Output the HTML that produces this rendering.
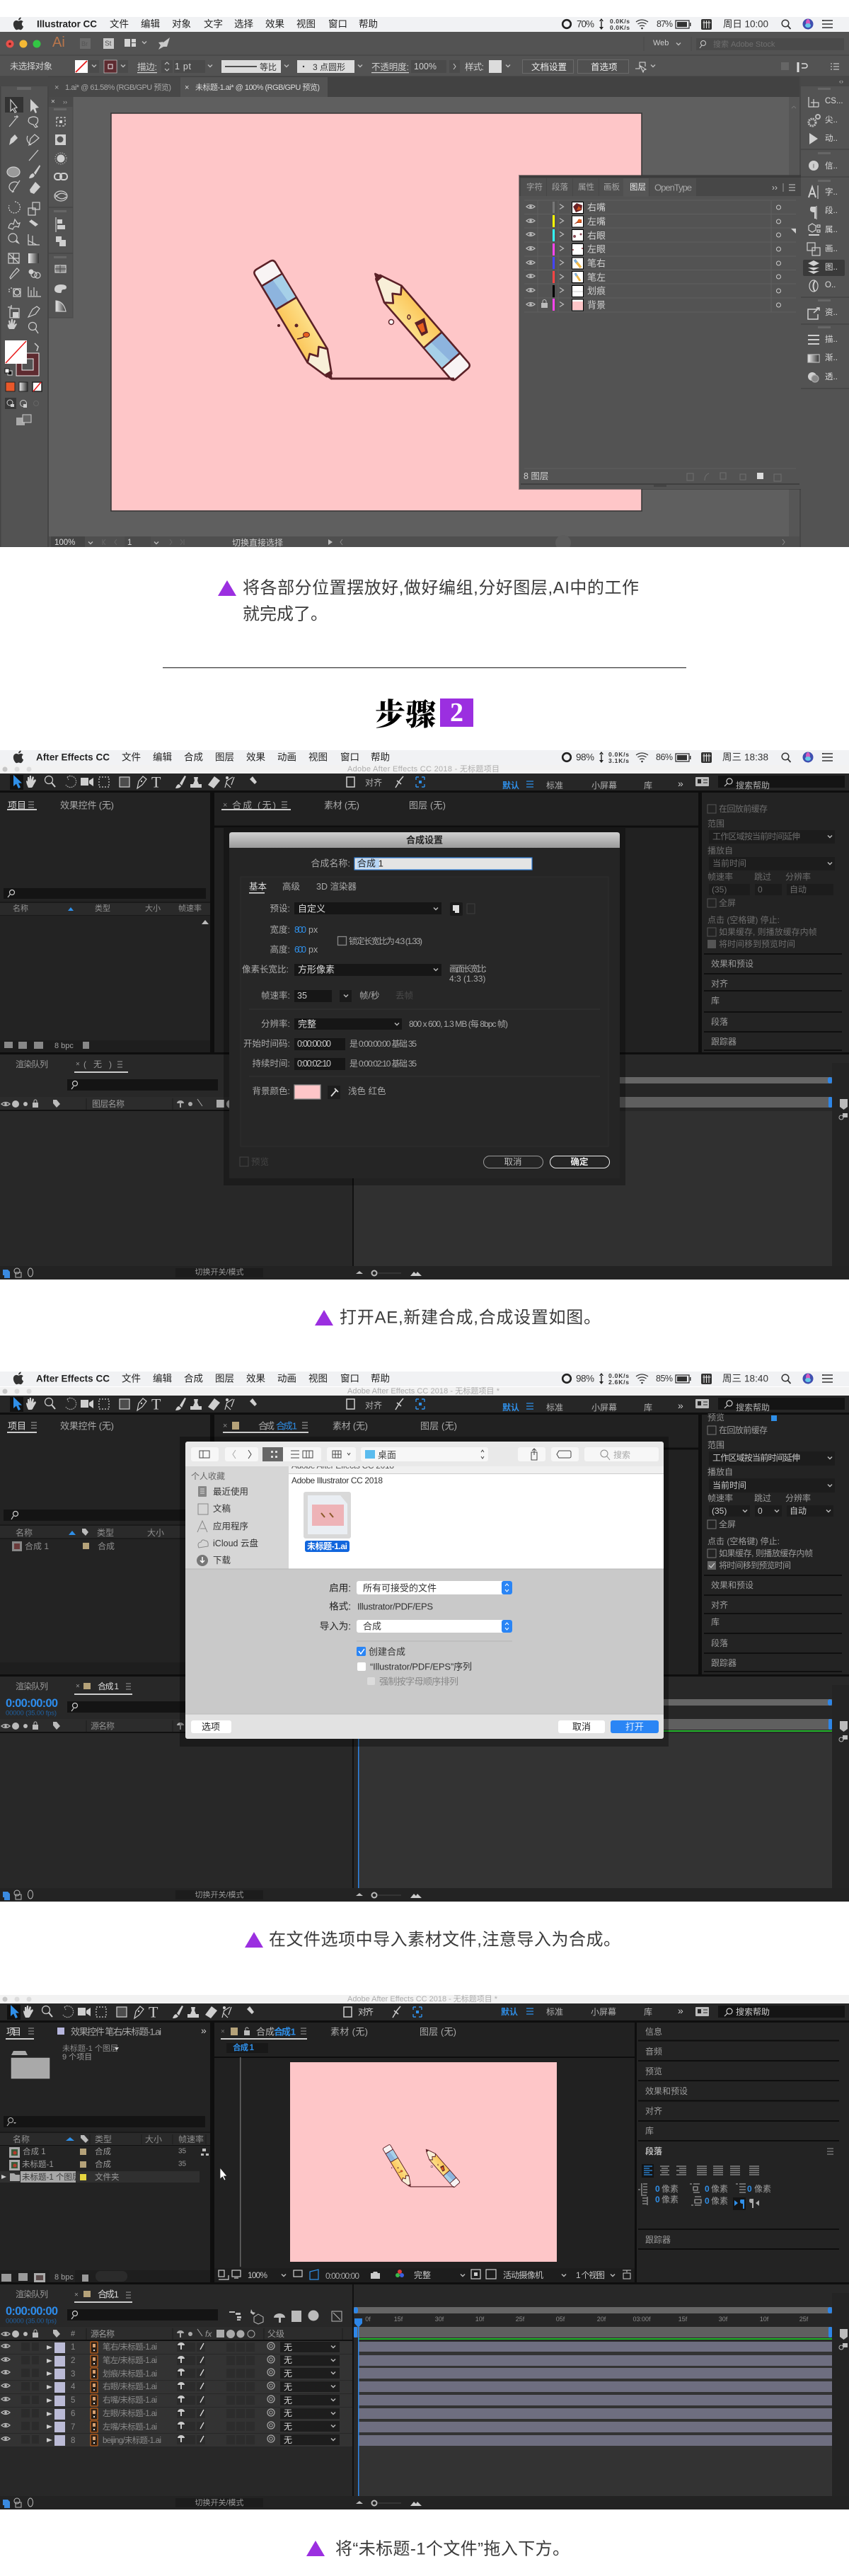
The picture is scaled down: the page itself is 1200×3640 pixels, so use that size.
<!DOCTYPE html>
<html lang="zh"><head><meta charset="utf-8"><title>步骤</title>
<style>
html,body{margin:0;padding:0;background:#fff}
svg{display:block}
text{font-family:"Liberation Sans","Noto Sans CJK SC",sans-serif;dominant-baseline:central;white-space:pre}
.cap{font-size:24px;fill:#3a3a3a}
.ic{fill:none;stroke:#cfcfcf;stroke-width:1.2}
.f{fill:#cfcfcf;stroke:none}
</style></head><body>
<svg xmlns="http://www.w3.org/2000/svg" width="1200" height="3640" viewBox="0 0 1200 3640">
<defs>
<linearGradient id="yl" x1="0" x2="1" y1="0" y2="0"><stop offset="0" stop-color="#fbc65a"/><stop offset="1" stop-color="#fde08a"/></linearGradient>
<linearGradient id="gg" x1="0" x2="1" y1="0" y2="0"><stop offset="0" stop-color="#eee"/><stop offset="1" stop-color="#333"/></linearGradient>
<linearGradient id="tb" x1="0" x2="0" y1="0" y2="1"><stop offset="0" stop-color="#d0d0d0"/><stop offset="1" stop-color="#9a9a9a"/></linearGradient>
<g id="pencil" stroke="#5b2127" stroke-width="2.6" stroke-linejoin="round">
<path d="M-17 24V6Q-17 0-11 0H11Q17 0 17 6V24Z" fill="#f8f4f4"/>
<path d="M-17 24H17V63H-17Z" fill="#8db4de"/><path d="M1 25H16V62H4Z" fill="#a6d0e8" stroke="none"/>
<path d="M-17 63H17V148L8 139L0 150L-8 141L-17 150Z" fill="url(#yl)"/>
<path d="M-17 150L-8 141L0 150L8 139L17 148L4 181H-4Z" fill="#f8efd8"/>
<path d="M-4 178L0 187L4 178Z" fill="#5b2127"/>
</g>
<g id="art">
<use href="#pencil" transform="translate(372,375) rotate(-31)"/>
<use href="#pencil" transform="translate(653,528) rotate(139)"/>
<path d="M468 535H642" stroke="#5b2127" stroke-width="3" fill="none"/>
<circle cx="419" cy="460" r="2.5" fill="#5b2127"/><circle cx="394" cy="460" r="2" fill="#5b2127"/>
<path d="M420 479Q428 478 432 474" stroke="#5b2127" stroke-width="1.6" fill="none"/><ellipse cx="433" cy="473" rx="4.5" ry="3.5" fill="#e85f20" stroke="#5b2127"/>
<ellipse cx="578" cy="448" rx="2" ry="3" fill="none" stroke="#5b2127" stroke-width="1.4"/><circle cx="553" cy="455" r="3.5" fill="#fff" stroke="#5b2127" stroke-width="1.5"/>
<path d="M586 456L600 449L605 470L596 475Z" fill="#5b2127"/><path d="M590 460L598 456L601 468L596 470Z" fill="#e8601e"/>
</g>
<path id="apple" transform="scale(1.05)" fill="#333" d="M2.6-6.5c.6-.7 1-1.6.9-2.6-.9 0-1.9.6-2.5 1.3-.5.6-1 1.6-.9 2.5 1 .1 2-.5 2.5-1.2zM3.4-4.9c-1.4-.1-2.6.8-3.2.8-.7 0-1.7-.8-2.8-.8-1.4 0-2.8.8-3.5 2.1-1.5 2.6-.4 6.4 1.1 8.5.7 1 1.5 2.2 2.6 2.1 1 0 1.4-.7 2.7-.7s1.6.7 2.7.7 1.9-1 2.6-2.1c.8-1.2 1.1-2.3 1.2-2.4-.1 0-2.2-.9-2.2-3.4 0-2.1 1.7-3.1 1.8-3.2-1-1.5-2.5-1.6-3-1.6z"/>
<g id="macicons">
<circle cx="801" cy="10" r="5.8" fill="none" stroke="#222" stroke-width="2.6"/>
<path d="M850 2l-3 4h6zM850 18l-3-4h6zM849.3 5h1.4v10h-1.4z" fill="#222"/>
<g fill="none" stroke="#333" stroke-width="1.2"><path d="M899 7q8-6 17 0M901.500 10q6-4 12 0M904 13q3.500-2 7 0"/></g><circle cx="907.500" cy="16" r="1.300" fill="#333"/>
<rect x="955" y="5" width="19" height="11" fill="none" stroke="#222" stroke-width="1.200"/><rect x="957" y="7" width="14" height="7" fill="#333"/><rect x="975" y="8" width="1.500" height="5" fill="#333"/>
<rect x="991" y="3" width="15" height="15" rx="2" fill="#333"/><path d="M995 5v11M998.500 5v11M1002 5v11M993.500 8h11" stroke="#eee" stroke-width="1"/>
<circle cx="1110" cy="9" r="4.800" fill="none" stroke="#333" stroke-width="1.500"/><path d="M1113.500 12.500l4 4.500" stroke="#333" stroke-width="1.700"/>
<circle cx="1142" cy="10" r="7.500" fill="#3f4fb0"/><ellipse cx="1142" cy="8" rx="3" ry="5" fill="#d65ac0"/><ellipse cx="1142" cy="12" rx="4" ry="3" fill="#65c8e8"/>
<path d="M1162 5h15M1162 10h15M1162 15h15" stroke="#333" stroke-width="1.400"/><circle cx="1163" cy="5" r="1" fill="#333"/>
</g>
<g id="eye"><path d="M-6 0Q0-5 6 0Q0 5-6 0Z" fill="none" stroke="#bbb" stroke-width="1.300"/><circle r="1.800" fill="#bbb"/></g>
<path id="chev" d="M-3-1.500L0 1.500L3-1.500" fill="none" stroke="#bbb" stroke-width="1.400"/>
<path id="lay" d="M-3-3.500L2.500 0L-3 3.500" fill="none" stroke="#bbb" stroke-width="1.200"/>

<!-- AE frame, section-4 coordinates -->
<g id="aeframe">
<rect y="2819" width="1200" height="12" fill="#f2f2f2"/>
<circle cx="7" cy="2825" r="3.500" fill="#c6c6c6"/><circle cx="24" cy="2825" r="3.500" fill="#dcdcdc"/><circle cx="41" cy="2825" r="3.500" fill="#dcdcdc"/>
<rect y="2831" width="1200" height="24" fill="#262626"/>
<rect y="2855" width="1200" height="691" fill="#0e0e0e"/>
<rect y="2858" width="297" height="367" fill="#232323"/>
<rect x="0" y="3208" width="297" height="17" fill="#1e1e1e"/>
<rect x="303" y="2858" width="594" height="367" fill="#212121"/>
<rect y="3228" width="1200" height="318" fill="#282828"/>
<rect x="1015" y="2834" width="179" height="17" fill="#141414"/>
<path d="M1027 2838a4 4 0 1 1-.01 0M1024 2845l-4 4" stroke="#ccc" fill="none" stroke-width="1.200" transform="translate(4,0)"/>
<rect x="983" y="2836" width="19" height="13" rx="1" fill="#bbb"/><rect x="986" y="2839" width="5" height="6" fill="#262626"/><path d="M994 2840h6M994 2844h6" stroke="#262626"/>
</g>
<g id="aetools">
<rect x="10" y="-10" width="19" height="21" fill="#111"/>
<path d="M15-10V6L19 2.500L22 9L25 7.500L22 1.500H27Z" fill="#2f8fe8"/>
<g class="ic">
<path d="M36 8Q33 2 33-2L35-1V-7L37-7V-3L38-9L40-9V-3L42-8L44-7L43-2L46-4L47-2L43 5Q42 8 40 8Z" class="f"/>
<circle cx="65" cy="-3" r="5.500"/><path d="M69 1L74 7" stroke-width="2"/>
<path d="M91-7a8 8 0 1 1-2 11M91-7L95-9M91-7L93-3" stroke="#999" stroke-dasharray="2 1"/>
<rect x="110" y="-6" width="11" height="11" class="f"/><path d="M122-2L128-6V6L122 2Z" class="f"/>
<rect x="136" y="-7" width="14" height="14" stroke-dasharray="2 2"/>
<rect x="165" y="-7" width="14" height="14" fill="#4d4d4d"/>
<path d="M190 9L192-1L198-8L203-4L197 4Z"/><circle cx="196" cy="-1" r="1.200" class="f"/>
<path d="M244 9Q246 3 249 3L252 6Q250 9 244 9ZM250 2L257-9L259-8L253 5Z" class="f"/>
<path d="M265 3H281V8H265ZM269 3L271-2L270-7H276L275-2L277 3Z" class="f"/>
<path d="M290 4L299-8L307-2L298 9Z" class="f"/>
<circle cx="317" cy="-6" r="2" class="f"/><path d="M317-3L314 8M317-2L325-7M316 2L322 8"/><path d="M327-7L323 4"/>
<path d="M347 8L351 2M349-4L356 3L359 0L353-8ZM352-9L360-2" class="f" stroke="#ccc"/>
<rect x="486" y="-7" width="11" height="14" stroke-width="1.500"/>
<path d="M555 8L561-2L566-8M557-2L563 3" stroke-width="1.500"/>
</g>
<text x="210" y="0" font-size="22" fill="#cfcfcf" style="font-family:'Liberation Serif'">T</text>
<path d="M584-7v4M584-7h4M596-7h-4M596-7v4M584 7v-4M584 7h4M596 7h-4M596 7v-4" stroke="#2f8fe8" fill="none" stroke-width="1.400"/><rect x="588" y="-2" width="4" height="4" fill="#2f8fe8"/>
</g>
<g id="hdr">
<rect y="3288" width="498" height="18" fill="#2c2c2c"/><rect y="3306" width="498" height="2" fill="#111"/>
<use href="#eye" x="8" y="3298"/><circle cx="22" cy="3298" r="5" fill="#bbb"/><circle cx="36" cy="3298" r="3" fill="#bbb"/><rect x="46" y="3296" width="8" height="7" fill="#bbb"/><path d="M48 3296v-2a2 2 0 0 1 4 0v2" stroke="#bbb" fill="none"/>
<path d="M75 3292h5l5 6-5 5-5-6z" fill="#bbb"/>
<path d="M122 3290v16M244 3290v16M373 3290v16M484 3290v16" stroke="#1c1c1c"/>
<g fill="#aaa"><path d="M250 3297a5 4 0 0 1 10 0zM254 3297h2v6h-2z"/><circle cx="269" cy="3298" r="3"/><path d="M279 3291l7 10" stroke="#aaa" fill="none"/><rect x="306" y="3292" width="11" height="11"/><circle cx="326" cy="3298" r="6" /><circle cx="340" cy="3298" r="5.500"/><circle cx="355" cy="3298" r="5" fill="none" stroke="#aaa"/></g>
<rect x="500" y="3260" width="676" height="9" fill="#666"/><rect x="500" y="3269" width="676" height="19" fill="#262626"/><rect x="500" y="3288" width="676" height="15" fill="#5f5f5f"/>
<rect x="1176" y="3240" width="24" height="306" fill="#242424"/>
<path d="M1187 3291h11v11l-5.500 4-5.500-4z" fill="#bbb"/><circle cx="1189" cy="3317" r="3" fill="none" stroke="#bbb"/><rect x="1191" y="3311" width="7" height="6" fill="#bbb"/>
<rect x="500" y="3260" width="6" height="9" rx="3" fill="#2d86e8"/><rect x="1170" y="3260" width="6" height="9" rx="3" fill="#2d86e8"/>
<rect x="500" y="3288" width="5" height="15" rx="2" fill="#2d86e8"/><rect x="1171" y="3288" width="5" height="15" rx="2" fill="#2d86e8"/>
<rect x="498" y="3228" width="2" height="300" fill="#111"/>
<rect y="3527" width="1200" height="19" fill="#232323"/>
<rect x="248" y="3530" width="124" height="13" fill="#1c1c1c"/>
<rect x="95" y="3263" width="213" height="16" fill="#141414"/>
<g class="ic"><circle cx="106" cy="3269" r="3.500"/><path d="M104 3273l-3 4"/></g>
<g fill="#bbb"><path d="M324 3266h8v2h-8zM333 3268h7v3h-7zM335 3273h6v3h-6zM335 3277h5v2h-5z"/><path d="M355 3263l2 4 4 1-3 3-4-3z"/><path d="M365 3270l7 4v7l-7 3-6-3v-7z" fill="none" stroke="#bbb"/><path d="M387 3275a8 6 0 0 1 16 0zM394 3275h3v7h-3z"/><rect x="412" y="3265" width="14" height="16"/><circle cx="443" cy="3272" r="7.500"/></g>
<rect x="469" y="3266" width="14" height="14" fill="none" stroke="#bbb"/><path d="M471 3268l10 10" stroke="#bbb"/>
<g fill="#3a8ae0"><path d="M4 3532h7l3 3v9H6v-4H4z"/></g><g fill="none" stroke="#bbb"><circle cx="24" cy="3534" r="4"/><rect x="22" y="3536" width="8" height="7"/><ellipse cx="43" cy="3536" rx="3.500" ry="6"/></g>
<path d="M503 3538l5-4 5 4z" fill="#bbb"/><circle cx="529" cy="3537" r="3.500" fill="none" stroke="#bbb" stroke-width="2"/><path d="M534 3537h33" stroke="#444"/><path d="M580 3541l5-6 3 3 2-3 6 6z" fill="#ccc"/>
</g>
<g id="hastl"><rect x="506" y="3280" width="1.500" height="247" fill="#2d86e8"/><path d="M501 3276h11v7l-5.500 6-5.500-6z" fill="#2d86e8"/></g>
<g id="ltr">
<rect width="498" height="18" y="-9" fill="#333"/>
<use href="#eye" x="8" y="-2"/>
<rect x="30" y="-7" width="12" height="12" fill="#2b2b2b"/><rect x="45" y="-7" width="10" height="12" fill="#2b2b2b"/>
<path d="M66-3l8 3-8 3z" fill="#ccc"/><rect x="77" y="-7" width="15" height="15" fill="#bbbbd6"/>
<rect x="128" y="-8" width="10" height="16" rx="1" fill="#2a2018" stroke="#c0601a" stroke-width="1.300"/><rect x="131" y="-5" width="4" height="5" fill="#d8a070"/><rect x="132" y="3" width="2" height="2" fill="#ddd"/>
<rect x="250" y="-7" width="26" height="13" fill="#2b2b2b"/><path d="M251-3a5 4 0 0 1 10 0zM255-3h2v6h-2zM251 3h10" fill="#ccc"/>
<rect x="278" y="-7" width="12" height="13" fill="#2b2b2b"/><path d="M283 3L288-6" stroke="#ddd" stroke-width="1.300"/>
<rect x="320" y="-7" width="12" height="13" fill="#2c2c2c"/><rect x="334" y="-7" width="12" height="13" fill="#2c2c2c"/><rect x="348" y="-7" width="12" height="13" fill="#2c2c2c"/>
<circle cx="383" cy="-2" r="5" fill="none" stroke="#aaa" stroke-width="1.200"/><circle cx="383" cy="-2" r="2.200" fill="none" stroke="#aaa"/>
<rect x="396" y="-8" width="84" height="15" fill="#1d1d1d"/><use href="#chev" x="471" y="-1"/>
</g>
</defs>

<!-- ===== SECTION 1 : Illustrator ===== -->
<rect y="24" width="1200" height="21" fill="#f1f2f4"/>
<use href="#apple" x="26" y="34"/>
<g transform="translate(0,24)"><use href="#macicons"/></g>
<g font-size="13.500" fill="#222">
<text x="52" y="34" font-weight="700" font-size="13.500" textLength="85">Illustrator CC</text>
<text x="155" y="34">文件</text><text x="199" y="34">编辑</text><text x="243" y="34">对象</text><text x="288" y="34">文字</text><text x="331" y="34">选择</text><text x="375" y="34">效果</text><text x="419" y="34">视图</text><text x="464" y="34">窗口</text><text x="507" y="34">帮助</text>
<text x="815" y="34" textLength="25" fill="#333">70%</text>
<text x="928" y="34" textLength="23" fill="#333" font-size="12.500">87%</text>
<text x="1022" y="34" textLength="64" fill="#333">周日 10:00</text>
</g>
<g font-size="8.500" fill="#333" font-weight="700"><text x="862" y="30" textLength="28">0.0K/s</text><text x="862" y="39" textLength="28">0.0K/s</text></g>

<rect y="45" width="1200" height="728" fill="#535353"/>
<path d="M0 78H1200M0 108H1200" stroke="#414141"/>
<circle cx="14" cy="62" r="5.500" fill="#e8504a"/><circle cx="14" cy="62" r="1.800" fill="#7a1a18"/><circle cx="33" cy="62" r="5.500" fill="#f5b935"/><circle cx="52" cy="62" r="5.500" fill="#33c744"/>
<text x="74" y="60" font-size="20" fill="#b8764c" font-weight="400">Ai</text>
<rect x="113" y="54" width="15" height="15" fill="#6a6a6a"/><text x="115" y="62" font-size="9" fill="#555">Br</text>
<rect x="146" y="54" width="15" height="15" fill="#c9c9c9"/><text x="148" y="62" font-size="10" fill="#555">St</text>
<path d="M176 55h8v11h-8zM186 55h6v5h-6zM186 61h6v5h-6z" fill="#d4d4d4"/><use href="#chev" x="204" y="60"/>
<path d="M224 70L228 62L240 53L236 66L231 66ZM224 60L231 59L227 64Z" fill="#c9c9c9"/>
<path d="M910 52V72M977 52V72" stroke="#4a4a4a"/>
<text x="923" y="61" font-size="11" fill="#ccc" font-weight="400">Web</text><use href="#chev" x="959" y="62"/>
<rect x="984" y="54" width="209" height="17" fill="#4a4a4a"/><circle cx="994" cy="61" r="3.500" fill="none" stroke="#ccc"/><path d="M992 64l-3 4" stroke="#ccc"/>
<text x="1008" y="63" font-size="11" fill="#6f6f6f">搜索 Adobe Stock</text>

<!-- control bar -->
<g font-size="12.500" fill="#d0d0d0">
<text x="14" y="94" textLength="60">未选择对象</text>
<rect x="106" y="85" width="18" height="18" fill="#fff"/><path d="M107 102L123 86" stroke="#e81a1a" stroke-width="1.800"/>
<rect x="126" y="85" width="14" height="18" fill="#4b4b4b"/><use href="#chev" x="133" y="93"/>
<rect x="147" y="85" width="18" height="18" fill="#5e2b30" stroke="#ddd" stroke-width=".6"/><rect x="153" y="91" width="6" height="6" fill="none" stroke="#eee"/>
<rect x="167" y="85" width="14" height="18" fill="#4b4b4b"/><use href="#chev" x="174" y="93"/>
<text x="194" y="95" textLength="28" text-decoration="underline">描边:</text>
<rect x="228" y="85" width="16" height="18" fill="#4b4b4b"/><path d="M233 91l3-3 3 3M233 97l3 3 3-3" stroke="#ccc" fill="none"/>
<rect x="246" y="85" width="44" height="18" fill="#4a4a4a"/><text x="247" y="94" textLength="23">1 pt</text>
<use href="#chev" x="297" y="93"/>
<rect x="313" y="85" width="84" height="18" fill="#dcdcdc"/><path d="M318 94H363" stroke="#222" stroke-width="1.600"/><text x="367" y="95" fill="#333" font-size="12">等比</text><use href="#chev" x="405" y="93"/>
<rect x="420" y="85" width="81" height="18" fill="#dcdcdc"/><circle cx="429" cy="94" r="1.200" fill="#333"/><text x="442" y="95" fill="#333" font-size="12">3 点圆形</text><use href="#chev" x="509" y="93"/>
<text x="525" y="95" textLength="53" text-decoration="underline">不透明度:</text>
<rect x="581" y="85" width="50" height="18" fill="#4a4a4a"/><text x="585" y="94">100%</text>
<rect x="635" y="85" width="15" height="18" fill="#4b4b4b"/><path d="M641 90l3 4-3 4" stroke="#ccc" fill="none"/>
<text x="657" y="95" textLength="27">样式:</text>
<rect x="691" y="85" width="18" height="18" fill="#dcdcdc"/><use href="#chev" x="718" y="93"/>
<rect x="738.500" y="84.500" width="72" height="19" fill="#505050" stroke="#6a6a6a"/><text x="751" y="95" fill="#eee">文档设置</text>
<rect x="816.500" y="84.500" width="72" height="19" fill="#505050" stroke="#6a6a6a"/><text x="835" y="95" fill="#eee">首选项</text>
</g>
<path d="M898 97h6v-9h8v6M905 93l8 5-3 1-1 3z" fill="none" stroke="#ddd"/><use href="#chev" x="923" y="93"/>
<rect x="1104" y="88" width="11" height="11" fill="#666"/><path d="M1128 88v14" stroke="#ddd" stroke-width="3"/><path d="M1133 90h5a3 3 0 0 1 0 6h-5" stroke="#ddd" fill="none" stroke-width="1.500"/><path d="M1174 90h2M1174 94h2M1174 98h2M1178 90h8M1178 94h8M1178 98h8" stroke="#ddd"/>

<!-- tabs row -->
<rect y="108" width="1200" height="29" fill="#424242"/>
<rect x="0" y="108" width="68" height="14" fill="#484848"/>
<rect x="68" y="109" width="187" height="28" fill="#484848"/>
<rect x="255" y="109" width="208" height="28" fill="#535353"/>
<g font-size="11" fill="#a8a8a8"><text x="77" y="124">×</text><text x="92" y="124" textLength="150">1.ai* @ 61.58% (RGB/GPU 预览)</text></g>
<g font-size="11" fill="#dcdcdc"><text x="261" y="124">×</text><text x="276" y="124" textLength="176">未标题-1.ai* @ 100% (RGB/GPU 预览)</text></g>

<!-- canvas -->
<rect x="69" y="137" width="1061" height="636" fill="#5f5f5f"/>
<rect x="1115" y="137" width="15" height="621" fill="#565656"/>
<rect x="69" y="758" width="1061" height="15" fill="#4f4f4f"/>
<rect x="157" y="160" width="750" height="562" fill="#fec6c8" stroke="#333" stroke-width="1.500"/>
<use href="#art"/>
<path d="M1122 150l-3 3M1122 150l3 3" stroke="#777"/>

<!-- left tools -->
<rect x="0" y="122" width="68" height="651" fill="#535353"/>
<rect x="67" y="122" width="2" height="651" fill="#454545"/>
<rect x="0" y="122" width="1.500" height="651" fill="#444"/>
<path d="M0 773H69" stroke="#444"/>
<rect x="24" y="123" width="20" height="4" fill="#666"/>
<rect x="7" y="137" width="26" height="22" fill="#333"/>
<g class="ic">
<path d="M15 141V157L18 154L21 159L23 158L20 153L24 152Z"/>
<path d="M43 140V158L47 154L50 160L52 159L50 153L55 152Z" class="f"/>
<path d="M13 179L23 167M24 163v4M20 165h6"/><path d="M41 167q7-4 12 0 2 6-3 9l3 3-3 1-3-4q-6-1-7-5z"/>
<path d="M13 205L15 196L21 190L25 195L19 201ZM18 198l2 2" class="f" stroke="#ccc"/>
<path d="M41 205L43 196L49 190L55 195L48 201Z"/><path d="M44 205q-8-6-5-13"/>
<path d="M41 227L54 212"/>
<ellipse cx="19" cy="243" rx="9" ry="7" fill="#9a9a9a"/>
<path d="M41 252Q43 245 47 245L49 248Q47 252 41 252ZM48 244L56 233L57 235L50 247Z" class="f"/>
<path d="M28 255L17 272M25 258a8 7 0 1 0-5 13"/>
<path d="M42 268L50 257L57 264L48 274L43 272Z" class="f"/>
<path d="M21 285a8 8 0 1 1-8 5" stroke-dasharray="2 1.500"/><rect x="40" y="294" width="10" height="10"/><rect x="46" y="286" width="10" height="10"/>
<path d="M12 322q2-9 7-5l2-7 4 6 3-1-2 6q-6-3-8 3z"/><path d="M41 321L48 314M44 310l10 7-4 3-9-7 4-3z" class="f" stroke="#ccc"/>
<circle cx="18" cy="336" r="6"/><path d="M24 339L28 345L22 342Z" class="f"/><path d="M40 331V346H56M40 340L52 346M46 333V346"/>
<rect x="12" y="358" width="15" height="14"/><path d="M12 365H27M19 358V372M13 359L26 371"/>
<path d="M14 392L18 386L24 379L27 382L21 388L15 394Z"/><rect x="40" y="358" width="15" height="14" fill="url(#gg)" stroke="none"/>
<circle cx="44" cy="384" r="3.500" class="f"/><circle cx="48" cy="388" r="4"/><circle cx="53" cy="389" r="4"/>
<path d="M12 409h2M12 412h2M15 407h2"/><circle cx="24" cy="413" r="4"/><path d="M19 408h10v11H19z"/>
<path d="M40 418V405M44 418V410M48 418V406M52 418V411M39 419H58"/>
<rect x="14" y="436" width="13" height="13"/><rect x="18" y="441" width="8" height="8" class="f"/><path d="M11 434h5M16 431v5"/>
<path d="M40 448L46 437L52 433L56 436L50 444Z"/>
</g>
<path d="M13 465q-3-4-2-7l2 1-1-6h2l1 5 1-7h2v7l2-6 2 1-2 6 3-2 1 1-4 7z" fill="#ccc"/>
<circle cx="46" cy="461" r="5.500" fill="none" stroke="#ccc" stroke-width="1.200"/><path d="M50 465l4 6" stroke="#ccc" stroke-width="1.400"/>
<rect x="23" y="499" width="32" height="32" fill="#5e2b30" stroke="#eee"/><rect x="31" y="507" width="16" height="16" fill="#535353" stroke="#eee"/>
<rect x="7" y="481" width="31" height="33" fill="#fff"/><path d="M8 513L37 482" stroke="#e81a1a" stroke-width="1.500"/>
<rect x="11" y="524" width="6" height="6" fill="#111" stroke="#ddd"/><rect x="7" y="521" width="6" height="6" fill="#fff" stroke="#111"/>
<path d="M49 485l5 5-2 6" stroke="#ccc" fill="none" stroke-width="1.500"/>
<rect x="8" y="540" width="13" height="13" fill="#e8582a" stroke="#222"/><rect x="27" y="540" width="12" height="13" fill="url(#gg)" stroke="#222"/><rect x="46" y="540" width="13" height="13" fill="#fff" stroke="#222" stroke-width="1.500"/><path d="M47 553L58 540" stroke="#e81a1a" stroke-width="1.500"/>
<rect x="7" y="562" width="16" height="16" fill="#383838"/><circle cx="14" cy="569" r="4" fill="none" stroke="#ccc"/><rect x="15" y="571" width="5" height="4" fill="#ccc"/><circle cx="33" cy="570" r="4.500" fill="none" stroke="#ccc"/><rect x="33" y="571" width="5" height="5" fill="#ccc"/><circle cx="51" cy="570" r="3.500" fill="none" stroke="#666"/>
<rect x="23" y="590" width="12" height="11" fill="#aaa"/><rect x="32" y="586" width="12" height="11" fill="#666" stroke="#ccc"/>

<!-- second column -->
<rect x="69" y="137" width="34" height="312" fill="#535353"/><rect x="69" y="137" width="34" height="14" fill="#4a4a4a"/><path d="M103 137V449H69" fill="none" stroke="#484848"/>
<text x="72" y="144" font-size="10" fill="#ccc">×</text><text x="89" y="144" font-size="9" fill="#aaa">››</text>
<path d="M69 293H103M69 358H103" stroke="#464646" stroke-width="1.500"/>
<rect x="76" y="153" width="18" height="3" fill="#666"/><rect x="76" y="297" width="18" height="3" fill="#666"/><rect x="76" y="362" width="18" height="3" fill="#666"/>
<g class="ic">
<rect x="80" y="166" width="12" height="12" stroke-dasharray="3 2"/><rect x="84" y="170" width="4" height="4" class="f"/>
<rect x="78" y="190" width="15" height="15" class="f"/><circle cx="85" cy="197" r="4.500" fill="#535353" stroke="none"/>
<circle cx="86" cy="224" r="5.500" class="f"/><circle cx="86" cy="224" r="8" stroke-dasharray="1 2"/>
<rect x="77" y="245" width="10" height="9" rx="4" stroke-width="2"/><rect x="85" y="245" width="10" height="9" rx="4" stroke-width="2"/>
<ellipse cx="86" cy="277" rx="9" ry="7"/><path d="M78 279q8-10 16-3M78 275q8 10 16 3"/>
<path d="M79 307V328"/><rect x="81" y="310" width="7" height="6" class="f"/><rect x="81" y="318" width="11" height="6" class="f"/>
<rect x="79" y="334" width="8" height="8" class="f"/><rect x="84" y="339" width="9" height="9" class="f"/>
<rect x="78" y="375" width="15" height="10" fill="#888"/><path d="M78 380H93M85 375V385" stroke="#535353"/>
<path d="M77 409q0-7 9-7 8 0 8 4 0 3-4 3-3 0-3 3 0 2-2 2-8 0-8-5z" class="f"/>
<path d="M79 440V425Q90 426 93 440Z" fill="url(#gg)" stroke="#ccc"/>
</g>

<!-- right dock -->
<rect x="1130" y="108" width="70" height="665" fill="#535353"/><rect x="1130" y="108" width="2" height="665" fill="#474747"/>
<rect x="1132" y="108" width="68" height="14" fill="#484848"/><text x="1186" y="115" font-size="9" fill="#bbb">‹›</text>
<path d="M1132 211H1200M1132 250H1200M1132 420H1200M1132 458H1200M1132 549H1200" stroke="#454545" stroke-width="1.500"/>
<rect x="1156" y="124" width="18" height="3" fill="#666"/><rect x="1156" y="215" width="18" height="3" fill="#666"/><rect x="1156" y="254" width="18" height="3" fill="#666"/><rect x="1156" y="423" width="18" height="3" fill="#666"/><rect x="1156" y="461" width="18" height="3" fill="#666"/>
<rect x="1135" y="367" width="59" height="23" rx="2" fill="#3a3a3a"/>
<g font-size="11.500" fill="#dadada">
<text x="1166" y="143">CS...</text><text x="1166" y="170">尖..</text><text x="1166" y="196">动..</text><text x="1166" y="235">信..</text><text x="1166" y="272">字..</text><text x="1166" y="298">段..</text><text x="1166" y="325">属..</text><text x="1166" y="352">画..</text><text x="1166" y="378">图..</text><text x="1166" y="403">O..</text><text x="1166" y="442">资..</text><text x="1166" y="480">描..</text><text x="1166" y="506">渐..</text><text x="1166" y="533">透..</text>
</g>
<g class="ic">
<path d="M1143 137V151H1157M1146 145H1157V151M1150 140V151"/>
<circle cx="1148" cy="173" r="5" stroke-width="3" stroke="#bbb" stroke-dasharray="2 1"/><circle cx="1156" cy="165" r="3" stroke-width="2" stroke="#bbb"/>
<path d="M1144 188L1156 196L1144 204Z" class="f"/>
<circle cx="1150" cy="234" r="7" class="f"/><rect x="1149" y="231" width="2" height="7" fill="#535353"/>
<path d="M1143 279L1148 264L1153 279M1145 274H1151" stroke-width="2"/><path d="M1156 262V281"/>
<path d="M1147 292h6v17h-2v-9q-6 0-6-4 0-4 2-4z" class="f"/><path d="M1154 291V310"/>
<path d="M1143 319l5-3 5 3v6l-5 3-5-3zM1155 318h4v3h-4zM1155 325h4v3h-4z"/><path d="M1143 332H1158" stroke-width="2"/>
<rect x="1141" y="343" width="11" height="11"/><rect x="1148" y="350" width="11" height="11"/>
<path d="M1142 372l8-4 8 4-8 4zM1142 378l8 4 8-4M1142 383l8 4 8-4" class="f" stroke="#ddd" stroke-width="1.500"/>
<ellipse cx="1150" cy="404" rx="6" ry="8"/><path d="M1152 397q-5 7 0 15" stroke-width="2"/>
<path d="M1156 437H1142V451H1156V444M1150 442L1158 435M1154 435H1158V439" stroke-width="1.500"/>
<path d="M1142 474H1158M1142 480H1158M1142 486H1158" stroke-width="2"/>
<rect x="1142" y="501" width="16" height="11" fill="url(#gg)" stroke="#bbb"/>
<circle cx="1148" cy="532" r="6" class="f"/><circle cx="1152" cy="535" r="5" fill="#888" stroke="#aaa"/>
</g>

<!-- layers panel -->
<rect x="733" y="247" width="399" height="445" fill="#333" opacity=".5"/>
<rect x="734" y="248" width="398" height="443" fill="#535353"/>
<rect x="734" y="248" width="398" height="29" fill="#474747"/>
<rect x="734" y="248" width="398" height="3" fill="#3c3c3c"/>
<rect x="736" y="252" width="36" height="25" fill="#4f4f4f"/><rect x="773" y="252" width="36" height="25" fill="#4f4f4f"/><rect x="810" y="252" width="36" height="25" fill="#4f4f4f"/><rect x="847" y="252" width="34" height="25" fill="#4f4f4f"/><rect x="881" y="252" width="36" height="26" fill="#565656"/><rect x="918" y="252" width="66" height="25" fill="#4f4f4f"/>
<g font-size="11.500" fill="#a6a6a6">
<text x="744" y="265">字符</text><text x="780" y="265">段落</text><text x="817" y="265">属性</text><text x="853" y="265">画板</text><text x="890" y="265" fill="#ececec">图层</text><text x="925" y="265" font-size="13" textLength="53">OpenType</text>
</g>
<text x="1091" y="265" font-size="12" fill="#ccc">››</text><path d="M1107 259v12" stroke="#999"/><path d="M1115 261h9M1115 265h9M1115 269h9" stroke="#ccc"/>
<g stroke="#5f5f5f" fill="none">
<path d="M741 283H1125M741 302.500H1125M741 322H1125M741 342H1125M741 362H1125M741 381.500H1125M741 401H1125M741 421H1125M741 441H1125"/>
<path d="M760 283V441M789 283V441M1090 283V441"/>
<path d="M741 662H1125"/>
</g>
<g fill="#bbb">
<use href="#eye" x="750" y="292"/><use href="#eye" x="750" y="312"/><use href="#eye" x="750" y="331"/><use href="#eye" x="750" y="351"/><use href="#eye" x="750" y="371"/><use href="#eye" x="750" y="390"/><use href="#eye" x="750" y="410"/><use href="#eye" x="750" y="430"/>
</g>
<rect x="765" y="428" width="9" height="7" fill="#bbb"/><path d="M767 428v-2a2.500 2.500 0 0 1 5 0v2" stroke="#bbb" fill="none"/>
<rect x="781" y="285" width="3" height="16" fill="#777"/><rect x="781" y="304" width="3" height="17" fill="#ff0"/><rect x="781" y="324" width="3" height="17" fill="#3ff"/><rect x="781" y="344" width="3" height="17" fill="#f4e"/><rect x="781" y="363" width="3" height="17" fill="#44f"/><rect x="781" y="383" width="3" height="17" fill="#f44"/><rect x="781" y="403" width="3" height="17" fill="#000"/><rect x="781" y="422" width="3" height="17" fill="#f4e"/>
<use href="#lay" x="794" y="292"/><use href="#lay" x="794" y="312"/><use href="#lay" x="794" y="331"/><use href="#lay" x="794" y="351"/><use href="#lay" x="794" y="371"/><use href="#lay" x="794" y="391"/><use href="#lay" x="794" y="410"/><use href="#lay" x="794" y="430"/>
<g fill="#fff" stroke="#000">
<rect x="808.500" y="285.500" width="16" height="16"/><rect x="808.500" y="305" width="16" height="16"/><rect x="808.500" y="324.500" width="16" height="16"/><rect x="808.500" y="344.500" width="16" height="16"/><rect x="808.500" y="364" width="16" height="16"/><rect x="808.500" y="383.500" width="16" height="16"/><rect x="808.500" y="403.500" width="16" height="16"/><rect x="808.500" y="423" width="16" height="16"/>
</g>
<path d="M810 292L815 287L823 290L822 297L814 300Z" fill="#6a2226"/><path d="M818 291L822 296L815 297Z" fill="#d0501c"/>
<path d="M811 317L817 312L822 310L822 315L816 315Z" fill="#a63a1a"/><circle cx="819" cy="312" r="2.500" fill="#e0601a"/>
<circle cx="812" cy="334" r="2" fill="#8a4a55"/><circle cx="821" cy="331" r="1.500" fill="#8a4a55"/><circle cx="810" cy="353" r="1" fill="#8a2a35"/><circle cx="823" cy="351" r="1" fill="#8a2a35"/>
<path d="M812 367L821 378" stroke="#f0b94a" stroke-width="3.500"/><path d="M812 367L815 371" stroke="#7fb0de" stroke-width="3.500"/>
<path d="M813 386L820 397" stroke="#f0b94a" stroke-width="3"/><path d="M813 386L815 390" stroke="#7fb0de" stroke-width="3"/>
<path d="M809 412H824" stroke="#ccc"/>
<rect x="809" y="426" width="15" height="12" fill="#fec6c8"/>
<g font-size="13" fill="#d0d0d0">
<text x="830" y="293">右嘴</text><text x="830" y="313">左嘴</text><text x="830" y="333">右眼</text><text x="830" y="352">左眼</text><text x="830" y="372">笔右</text><text x="830" y="392">笔左</text><text x="830" y="411">划痕</text><text x="830" y="431">背景</text>
</g>
<g fill="none" stroke="#ccc" stroke-width="1"><circle cx="1100.500" cy="293" r="3"/><circle cx="1100.500" cy="313" r="3"/><circle cx="1100.500" cy="332" r="3"/><circle cx="1100.500" cy="352" r="3"/><circle cx="1100.500" cy="372" r="3"/><circle cx="1100.500" cy="391" r="3"/><circle cx="1100.500" cy="411" r="3"/><circle cx="1100.500" cy="431" r="3"/></g>
<path d="M1118 323h7v7z" fill="#ccc"/>
<text x="740" y="673" font-size="12.500" fill="#d0d0d0">8 图层</text>
<g stroke="#6f6f6f" fill="none"><rect x="971" y="669" width="9" height="10"/><path d="M996 679q0-8 6-10M1018 668h8v9h-8zM1046 670h8v8h-8z"/><rect x="1070" y="668" width="9" height="9" fill="#ddd" stroke="none"/><path d="M1094 670h10v10h-10z"/></g>
<rect x="736" y="683" width="394" height="2" fill="#404040"/>
<rect x="924" y="685" width="18" height="3" fill="#444"/>

<!-- status bar -->
<circle cx="796" cy="767" r="11" fill="#5c5c5c"/>
<rect x="72" y="758" width="48" height="15" fill="#444"/><text x="77" y="767" font-size="11.500" fill="#ddd">100%</text>
<use href="#chev" x="128" y="767"/><path d="M145 762v8M149 762l-3 4 3 4M165 762l-3 4 3 4" stroke="#666" fill="none"/>
<rect x="176" y="758" width="37" height="15" fill="#4a4a4a"/><text x="180" y="767" font-size="11.500" fill="#ddd">1</text><use href="#chev" x="221" y="767"/>
<path d="M240 762l3 4-3 4M255 762l3 4-3 4M260 762v8" stroke="#666" fill="none"/>
<text x="328" y="767" font-size="12" fill="#ccc" textLength="72">切换直接选择</text><path d="M464 762l6 4-6 4z" fill="#bbb"/><path d="M484 762l-3 4 3 4M1106 762l3 4-3 4" stroke="#888" fill="none"/>
<rect y="773" width="1200" height="10" fill="#fff"/>

<!-- caption 1 -->
<path d="M321 820L334 842H308Z" fill="#9b2fe0"/>
<text class="cap" x="343" y="831" textLength="560">将各部分位置摆放好,做好编组,分好图层,AI中的工作</text>
<text class="cap" x="343" y="868">就完成了。</text>
<path d="M230 943.500H970" stroke="#3a3a3a" stroke-width="1.200"/>
<text x="530" y="1007" font-size="43" font-weight="900" fill="#000" style="font-family:'Noto Serif CJK SC','Liberation Serif',serif">步骤</text>
<rect x="622" y="987" width="47" height="40" fill="#9b2fe0"/>
<text x="645.500" y="1007" font-size="38" font-weight="700" fill="#fff" text-anchor="middle" style="font-family:'Liberation Serif',serif">2</text>

<!-- ===== SECTION 2 : AE comp settings ===== -->
<rect y="1060" width="1200" height="21" fill="#f1f2f4"/>
<use href="#apple" x="26" y="1070"/>
<g transform="translate(0,1060)"><use href="#macicons"/></g>
<g font-size="13.500" fill="#222">
<text x="51" y="1070" font-weight="700" textLength="104">After Effects CC</text>
<text x="172" y="1070">文件</text><text x="216" y="1070">编辑</text><text x="260" y="1070">合成</text><text x="304" y="1070">图层</text><text x="348" y="1070">效果</text><text x="392" y="1070">动画</text><text x="436" y="1070">视图</text><text x="481" y="1070">窗口</text><text x="524" y="1070">帮助</text>
<text x="814" y="1070" textLength="26" fill="#333">98%</text><text x="927" y="1070" textLength="24" fill="#333" font-size="12.500">86%</text><text x="1021" y="1070" textLength="65" fill="#333">周三 18:38</text>
</g>
<g font-size="8.500" fill="#333" font-weight="700"><text x="860" y="1066" textLength="29">0.0K/s</text><text x="860" y="1075" textLength="29">3.1K/s</text></g>
<g transform="translate(0,-1738)"><use href="#aeframe"/>
<rect x="992" y="2858" width="208" height="367" fill="#232323"/><rect x="987" y="2858" width="5" height="367" fill="#0e0e0e"/>
<rect x="303" y="2858" width="684" height="367" fill="#212121"/>
<path d="M303 2906H987" stroke="#0e0e0e" stroke-width="3"/>
<use href="#hdr"/>
<rect x="500" y="3308" width="676" height="219" fill="#303030"/>
</g>
<use href="#aetools" transform="translate(4,1105)"/>
<g font-size="11" fill="#b0b0b0"><text x="491" y="1087" textLength="215" fill="#adadad">Adobe After Effects CC 2018 - 无标题项目</text></g>
<g font-size="12" fill="#b0b0b0">
<text x="516" y="1106" textLength="24">对齐</text>
<text x="710" y="1110" fill="#2f8fe8" font-weight="700">默认</text><path d="M744 1105h10M744 1109h10M744 1113h10" stroke="#2f8fe8" stroke-width="1.300" transform="translate(0,-1)"/>
<text x="772" y="1110">标准</text><text x="836" y="1110">小屏幕</text><text x="910" y="1110">库</text><text x="958" y="1107" fill="#ccc" font-size="14">»</text><text x="1040" y="1110">搜索帮助</text>
</g>
<g font-size="13" fill="#a8a8a8">
<text x="11" y="1138" fill="#ddd">项目</text><path d="M40 1133h8M40 1137h8M40 1141h8" stroke="#aaa"/><rect x="10" y="1143" width="42" height="2" fill="#ccc"/>
<text x="85" y="1138" textLength="76">效果控件 (无)</text>
<text x="315" y="1138" font-size="11" fill="#888">×</text><text x="328" y="1138" textLength="62">合成 (无)</text><path d="M398 1133h8M398 1137h8M398 1141h8" stroke="#aaa"/><rect x="313" y="1143" width="98" height="2" fill="#ccc"/>
<text x="458" y="1138" textLength="50">素材 (无)</text><text x="578" y="1138" textLength="52">图层 (无)</text>
</g>
<!-- left search + header -->
<rect x="5" y="1255" width="286" height="15" fill="#141414"/><g class="ic" transform="translate(0,-1738)"><circle cx="17" cy="2999" r="3.500"/><path d="M14 3002l-3 4"/></g>
<path d="M0 1275H297M0 1293H297" stroke="#111"/><rect y="1276" width="297" height="17" fill="#2a2a2a"/>
<g font-size="11" fill="#8f8f8f"><text x="18" y="1284">名称</text><path d="M96 1287l4-5 4 5z" fill="#2f8fe8"/><text x="134" y="1284">类型</text><text x="205" y="1284">大小</text><text x="252" y="1284">帧速率</text></g>
<path d="M290 1300l-5 6h10z" fill="#bbb"/>
<!-- left bottom bar -->
<g font-size="11" fill="#a0a0a0"><text x="77" y="1478">8 bpc</text></g>
<rect x="6" y="1472" width="12" height="9" fill="#888"/><rect x="26" y="1472" width="12" height="10" fill="#888"/><rect x="48" y="1472" width="13" height="10" fill="#888"/><rect x="117" y="1472" width="9" height="10" fill="#888"/>
<!-- right panel sec 2 -->
<g font-size="12" fill="#6c6c6c">
<rect x="1000" y="1137" width="12" height="12" fill="none" stroke="#555"/><text x="1016" y="1143" textLength="69">在回放前缓存</text><text x="1000" y="1164">范围</text>
<rect x="1002" y="1173" width="178" height="19" fill="#1c1c1c"/><text x="1007" y="1182" textLength="124">工作区域按当前时间延伸</text><use href="#chev" x="1173" y="1182"/>
<text x="1000" y="1202">播放自</text><rect x="1002" y="1211" width="178" height="19" fill="#1c1c1c"/><text x="1007" y="1220">当前时间</text><use href="#chev" x="1173" y="1220"/>
<text x="1000" y="1239">帧速率</text><text x="1066" y="1239">跳过</text><text x="1110" y="1239">分辨率</text>
<rect x="1002" y="1249" width="58" height="16" fill="#1c1c1c"/><text x="1006" y="1257">(35)</text><rect x="1067" y="1249" width="38" height="16" fill="#1c1c1c"/><text x="1071" y="1257">0</text><rect x="1112" y="1249" width="66" height="16" fill="#1c1c1c"/><text x="1116" y="1257">自动</text>
<rect x="1000" y="1270" width="12" height="12" fill="none" stroke="#555"/><text x="1016" y="1276">全屏</text>
<text x="1000" y="1300">点击 (空格键) 停止:</text><rect x="1000" y="1311" width="12" height="12" fill="none" stroke="#555"/><text x="1016" y="1317">如果缓存, 则播放缓存内帧</text><rect x="1000" y="1328" width="12" height="12" fill="#555"/><text x="1016" y="1334">将时间移到预览时间</text>
</g>
<g font-size="12" fill="#9a9a9a"><text x="1005" y="1362">效果和预设</text><text x="1005" y="1390">对齐</text><text x="1005" y="1414">库</text><text x="1005" y="1444">段落</text><text x="1005" y="1472">跟踪器</text></g>
<path d="M995 1348H1190M995 1376H1190M995 1400H1190M995 1430H1190M995 1458H1190M995 1484H1190" stroke="#0f0f0f" stroke-width="2"/>
<!-- timeline sec 2 -->
<g font-size="12" fill="#999"><text x="22" y="1504" textLength="46">渲染队列</text><text x="107" y="1504" font-size="10">×</text><text x="118" y="1504" textLength="40">(无)</text><path d="M166 1500h7M166 1504h7M166 1508h7" stroke="#999"/><rect x="105" y="1514" width="76" height="2" fill="#ccc"/><text x="130" y="1560" textLength="46">图层名称</text></g>
<g font-size="11" fill="#999"><text x="310" y="1798" text-anchor="middle">切换开关/模式</text></g>
<!-- dialog -->
<rect x="316" y="1170" width="568" height="505" fill="#000" opacity=".28"/>
<rect x="324" y="1176" width="552" height="489" fill="#252525"/>
<path d="M324 1198V1180Q324 1176 328 1176H872Q876 1176 876 1180V1198Z" fill="url(#tb)"/>
<rect x="340" y="1239" width="520" height="381" fill="#272727" stroke="#2d2d2d"/>
<text x="600" y="1187" font-size="13" font-weight="700" text-anchor="middle" fill="#222">合成设置</text>
<g font-size="12.500" fill="#a9a9a9" text-anchor="end">
<text x="495" y="1220" font-size="13">合成名称:</text><text x="410" y="1284">预设:</text><text x="410" y="1314">宽度:</text><text x="410" y="1342">高度:</text><text x="408" y="1370">像素长宽比:</text><text x="410" y="1407">帧速率:</text><text x="410" y="1447">分辨率:</text><text x="410" y="1475">开始时间码:</text><text x="410" y="1503">持续时间:</text><text x="410" y="1542">背景颜色:</text>
</g>
<rect x="501" y="1212" width="251" height="17" fill="#e4e4e4" stroke="#2f7fd9" stroke-width="1.200"/><rect x="504" y="1214" width="32" height="13" fill="#b8d6f5"/><text x="505" y="1220" font-size="13" fill="#222">合成 1</text>
<g font-size="12.500" fill="#a9a9a9">
<text x="352" y="1253" fill="#ddd">基本</text><rect x="352" y="1261" width="22" height="1.500" fill="#eee"/><text x="399" y="1253">高级</text><text x="447" y="1253">3D 渲染器</text>
<rect x="416" y="1275" width="208" height="17" fill="#161616"/><text x="421" y="1284" fill="#ddd" font-size="13">自定义</text><use href="#chev" x="616" y="1284"/>
<rect x="636" y="1275" width="18" height="19" rx="2" fill="#1a1a1a"/><path d="M640 1279h9v11h-6v-3h-3z" fill="#ddd"/><rect x="660" y="1277" width="11" height="14" fill="none" stroke="#3d3d3d"/>
<text x="416" y="1314" fill="#2f8fe8" textLength="17">800</text><text x="436" y="1314">px</text><text x="416" y="1342" fill="#2f8fe8" textLength="17">600</text><text x="436" y="1342">px</text>
<rect x="477.500" y="1323.500" width="12" height="12" fill="none" stroke="#888" stroke-width="1.300"/><text x="493" y="1330" textLength="104" font-size="12">锁定长宽比为 4:3 (1.33)</text>
<rect x="416" y="1362" width="208" height="17" fill="#161616"/><text x="421" y="1370" fill="#ddd" font-size="13">方形像素</text><use href="#chev" x="616" y="1370"/>
<text x="635" y="1369" font-size="12" textLength="53">画面长宽比:</text><text x="635" y="1383" font-size="12">4:3 (1.33)</text>
<rect x="416" y="1399" width="53" height="17" fill="#161616"/><text x="420" y="1407" fill="#ccc">35</text><rect x="480" y="1399" width="17" height="17" fill="#1a1a1a"/><use href="#chev" x="489" y="1407"/><text x="508" y="1407">帧/秒</text><text x="559" y="1407" fill="#4a4a4a">丢帧</text>
<path d="M352 1426H848M352 1521H848" stroke="#333"/>
<rect x="416" y="1439" width="152" height="16" fill="#161616"/><text x="421" y="1447" fill="#ddd" font-size="13">完整</text><use href="#chev" x="561" y="1447"/><text x="578" y="1447" font-size="12" textLength="140">800 x 600, 1.3 MB (每 8bpc 帧)</text>
<rect x="416" y="1467" width="72" height="17" fill="#161616"/><text x="420" y="1475" fill="#ccc" textLength="48">0:00:00:00</text><text x="494" y="1475" font-size="12" textLength="95">是 0:00:00:00 基础 35</text>
<rect x="416" y="1495" width="72" height="17" fill="#161616"/><text x="420" y="1503" fill="#ccc" textLength="48">0:00:02:10</text><text x="494" y="1503" font-size="12" textLength="95">是 0:00:02:10 基础 35</text>
<rect x="416" y="1533" width="37" height="20" fill="#fec6c8" stroke="#888" stroke-width="1.300"/><rect x="463" y="1534" width="18" height="19" fill="#1d1d1d"/><path d="M468 1549L475 1541M473 1538l5 5" stroke="#ddd" stroke-width="1.800"/><text x="492" y="1542">浅色 红色</text>
<rect x="339" y="1635" width="12" height="13" fill="none" stroke="#444"/><text x="355" y="1642" fill="#444">预览</text>
<rect x="683.500" y="1633.500" width="84" height="17" rx="8.500" fill="none" stroke="#999"/><text x="725" y="1642" text-anchor="middle" fill="#bbb">取消</text>
<rect x="777.500" y="1633.500" width="84" height="17" rx="8.500" fill="none" stroke="#eee"/><text x="819" y="1642" text-anchor="middle" fill="#eee" font-weight="700">确定</text>
</g>
<path d="M458 1851L471 1873H445Z" fill="#9b2fe0"/>
<text class="cap" x="480" y="1862" textLength="369">打开AE,新建合成,合成设置如图。</text>

<!-- ===== SECTION 3 : import ===== -->
<rect y="1938" width="1200" height="21" fill="#f1f2f4"/>
<use href="#apple" x="26" y="1948"/>
<g transform="translate(0,1938)"><use href="#macicons"/></g>
<g font-size="13.500" fill="#222">
<text x="51" y="1948" font-weight="700" textLength="104">After Effects CC</text>
<text x="172" y="1948">文件</text><text x="216" y="1948">编辑</text><text x="260" y="1948">合成</text><text x="304" y="1948">图层</text><text x="348" y="1948">效果</text><text x="392" y="1948">动画</text><text x="436" y="1948">视图</text><text x="481" y="1948">窗口</text><text x="524" y="1948">帮助</text>
<text x="814" y="1948" textLength="26" fill="#333">98%</text><text x="927" y="1948" textLength="24" fill="#333" font-size="12.500">85%</text><text x="1021" y="1948" textLength="65" fill="#333">周三 18:40</text>
</g>
<g font-size="8.500" fill="#333" font-weight="700"><text x="860" y="1944" textLength="29">0.0K/s</text><text x="860" y="1953" textLength="29">2.6K/s</text></g>
<g transform="translate(0,-859)"><use href="#aeframe"/>
<rect x="992" y="2858" width="208" height="367" fill="#232323"/><rect x="987" y="2858" width="5" height="367" fill="#0e0e0e"/>
<rect x="303" y="2858" width="684" height="367" fill="#212121"/>
<path d="M303 2906H987" stroke="#0e0e0e" stroke-width="3"/>
<use href="#hdr"/>
<rect x="506" y="3304" width="670" height="2" fill="#22b52a"/>
<rect x="506" y="3308" width="670" height="219" fill="#333"/>
<use href="#hastl"/>
</g>
<use href="#aetools" transform="translate(4,1984)"/>
<g font-size="12" fill="#b0b0b0">
<text x="491" y="1966" font-size="11" textLength="215" fill="#adadad">Adobe After Effects CC 2018 - 无标题项目 *</text>
<text x="516" y="1986" textLength="24">对齐</text>
<text x="710" y="1989" fill="#2f8fe8" font-weight="700">默认</text><path d="M744 1983h10M744 1987h10M744 1991h10" stroke="#2f8fe8" stroke-width="1.300"/>
<text x="772" y="1989">标准</text><text x="836" y="1989">小屏幕</text><text x="910" y="1989">库</text><text x="958" y="1986" fill="#ccc" font-size="14">»</text><text x="1040" y="1989">搜索帮助</text>
</g>
<g font-size="13" fill="#a8a8a8">
<text x="11" y="2015" fill="#ddd">项目</text><path d="M44 2010h8M44 2014h8M44 2018h8" stroke="#aaa"/><rect x="10" y="2023" width="42" height="2" fill="#ccc"/>
<text x="85" y="2015" textLength="76">效果控件 (无)</text>
<text x="315" y="2015" font-size="11" fill="#888">×</text><rect x="328" y="2009" width="10" height="11" fill="#b5a279"/><text x="365" y="2015" textLength="23">合成</text><text x="390" y="2015" fill="#2f8fe8" textLength="30">合成 1</text><path d="M427 2010h8M427 2014h8M427 2018h8" stroke="#aaa"/><rect x="315" y="2023" width="121" height="2" fill="#ccc"/>
<text x="470" y="2015" textLength="50">素材 (无)</text><text x="594" y="2015" textLength="52">图层 (无)</text>
</g>
<rect x="5" y="2133" width="286" height="16" fill="#141414"/><g class="ic" transform="translate(0,-859)"><circle cx="22" cy="2998" r="3.500"/><path d="M19 3001l-3 5"/></g>
<rect y="2156" width="297" height="18" fill="#2a2a2a"/><path d="M0 2155H297M0 2174H297" stroke="#111"/>
<g font-size="12" fill="#8f8f8f"><text x="22" y="2166" >名称</text><path d="M97 2169l5-6 5 6z" fill="#2f8fe8"/><path d="M116 2160h5l4 5-4 5-5-5z" fill="#bbb"/><text x="137" y="2166">类型</text><text x="208" y="2166">大小</text><text x="35" y="2185">合成 1</text><text x="138" y="2185">合成</text></g>
<rect x="17" y="2178" width="14" height="14" fill="#888"/><rect x="20" y="2181" width="8" height="8" fill="#6b3a3a"/><rect x="117" y="2180" width="9" height="9" fill="#b5a279"/>
<!-- right panel sec 3 -->
<g font-size="12" fill="#9c9c9c">
<text x="1000" y="2003" fill="#888">预览</text><rect x="1090" y="2000" width="8" height="8" fill="#2f8fe8"/>
<rect x="1000" y="2015" width="12" height="12" fill="none" stroke="#777"/><text x="1016" y="2021" textLength="69">在回放前缓存</text><text x="1000" y="2042">范围</text>
<rect x="1002" y="2051" width="178" height="20" fill="#1c1c1c"/><text x="1007" y="2060" textLength="124" fill="#ccc">工作区域按当前时间延伸</text><use href="#chev" x="1173" y="2060"/>
<text x="1000" y="2080">播放自</text><rect x="1002" y="2089" width="178" height="20" fill="#1c1c1c"/><text x="1007" y="2099" fill="#ccc">当前时间</text><use href="#chev" x="1173" y="2099"/>
<text x="1000" y="2117">帧速率</text><text x="1066" y="2117">跳过</text><text x="1110" y="2117">分辨率</text>
<rect x="1002" y="2127" width="58" height="16" fill="#1c1c1c"/><text x="1006" y="2135" fill="#ccc">(35)</text><use href="#chev" x="1053" y="2135"/><rect x="1067" y="2127" width="38" height="16" fill="#1c1c1c"/><text x="1071" y="2135" fill="#ccc">0</text><use href="#chev" x="1098" y="2135"/><rect x="1112" y="2127" width="66" height="16" fill="#1c1c1c"/><text x="1116" y="2135" fill="#ccc">自动</text><use href="#chev" x="1171" y="2135"/>
<rect x="1000" y="2148" width="12" height="12" fill="none" stroke="#777"/><text x="1016" y="2154">全屏</text>
<text x="1000" y="2178">点击 (空格键) 停止:</text><rect x="1000" y="2189" width="12" height="12" fill="none" stroke="#777"/><text x="1016" y="2195" textLength="133">如果缓存, 则播放缓存内帧</text><rect x="1000" y="2206" width="12" height="12" fill="#666"/><path d="M1002 2212l3 3 5-6" stroke="#ddd" fill="none"/><text x="1016" y="2212" textLength="102">将时间移到预览时间</text>
<text x="1005" y="2240">效果和预设</text><text x="1005" y="2268">对齐</text><text x="1005" y="2292">库</text><text x="1005" y="2322">段落</text><text x="1005" y="2350">跟踪器</text>
</g>
<path d="M995 2226H1190M995 2254H1190M995 2280H1190M995 2308H1190M995 2336H1190M995 2362H1190" stroke="#0f0f0f" stroke-width="2"/>
<!-- timeline sec 3 -->
<g font-size="12" fill="#9a9a9a">
<text x="22" y="2383" textLength="46">渲染队列</text><text x="107" y="2383" font-size="10">×</text><rect x="118" y="2378" width="10" height="9" fill="#b5a279"/><text x="138" y="2383" fill="#ddd" textLength="30">合成 1</text><path d="M178 2379h7M178 2383h7M178 2387h7" stroke="#999"/><rect x="105" y="2393" width="82" height="2" fill="#ccc"/>
</g>
<text x="8" y="2407" font-size="16.500" font-weight="700" fill="#2d8ceb" textLength="74">0:00:00:00</text><text x="8" y="2421" font-size="9.500" fill="#1f5f9f" textLength="72">00000 (35.00 fps)</text>
<g font-size="12" fill="#8f8f8f"><text x="128" y="2439" textLength="34">源名称</text><text x="378" y="2439">父级</text></g>
<text x="310" y="2678" font-size="11" fill="#999" text-anchor="middle">切换开关/模式</text>
<!-- dialog -->
<rect x="254" y="2030" width="691" height="438" fill="#000" opacity=".3"/>
<rect x="262" y="2037" width="676" height="420" rx="3" fill="#c9c9c9"/>
<path d="M262 2072V2041Q262 2037 266 2037H934Q938 2037 938 2041V2072Z" fill="#e9e9e9"/>
<g fill="#f7f7f7">
<rect x="270" y="2045" width="39" height="20" rx="3"/><rect x="318" y="2045" width="47" height="20" rx="3"/><rect x="371" y="2045" width="83" height="20" rx="3"/><rect x="462" y="2045" width="41" height="20" rx="3"/><rect x="510" y="2045" width="180" height="20" rx="3"/><rect x="732" y="2045" width="39" height="20" rx="3"/><rect x="779" y="2045" width="39" height="20" rx="3"/><rect x="826" y="2045" width="105" height="20" rx="3"/>
</g>
<rect x="371" y="2045" width="29" height="20" fill="#676767"/>
<g fill="none" stroke="#444">
<path d="M282 2050h14v10h-14zM287 2050v10" />
<path d="M333 2049l-4 6 4 6" stroke="#aaa"/><path d="M351 2049l4 6-4 6" />
<path d="M411 2050h12M411 2055h12M411 2060h12M428 2050h14v10h-14zM433 2050v10M437 2050v10"/>
<path d="M470 2050h12v10h-12zM470 2055h12M474 2050v10M478 2050v10"/>
<path d="M491 2053l2 3 2-3"/>
<path d="M751 2052v11h8v-11zM755 2056v-9M752 2050l3-3 3 3"/>
<path d="M790 2050h15a2 2 0 0 1 2 2v6a2 2 0 0 1-2 2h-15l-3-5z"/>
<circle cx="854" cy="2054" r="5" stroke="#888"/><path d="M858 2058l4 5" stroke="#888"/>
</g>
<g fill="#ddd"><rect x="383" y="2050" width="3" height="3"/><rect x="389" y="2050" width="3" height="3"/><rect x="383" y="2057" width="3" height="3"/><rect x="389" y="2057" width="3" height="3"/></g>
<rect x="516" y="2049" width="14" height="12" fill="#5bbcee"/>
<path d="M680 2052l2-3 2 3M680 2058l2 3 2-3" fill="none" stroke="#444" />
<text x="534" y="2056" font-size="13" fill="#444">桌面</text><text x="867" y="2056" font-size="12" fill="#aaa">搜索</text>
<rect x="262" y="2072" width="146" height="145" fill="#d6d6d6"/>
<rect x="408" y="2072" width="530" height="145" fill="#fff"/>
<rect x="408" y="2072" width="530" height="11" fill="#f0f0f0"/><path d="M408 2082.500H938" stroke="#ccc"/>
<text x="412" y="2071" font-size="12" fill="#555" textLength="145">Adobe After Effects CC 2018</text>
<rect x="262" y="2066" width="676" height="6" fill="#e9e9e9"/>
<text x="412" y="2092" font-size="12" fill="#333" textLength="129">Adobe Illustrator CC 2018</text>
<rect x="429" y="2108" width="67" height="66" rx="3" fill="#d9d9d9"/><path d="M435 2113h46l10 12v43h-56z" fill="#eaeef3"/><rect x="441" y="2126" width="45" height="30" fill="#eeb3b7"/><path d="M454 2138l5 6M466 2138l5 6" stroke="#8a5a2a" stroke-width="2"/>
<rect x="431" y="2177" width="63" height="16" rx="3" fill="#1166dd"/><text x="434" y="2185" font-size="12" fill="#fff" font-weight="700" textLength="57">未标题-1.ai</text>
<g font-size="12.500" fill="#333"><text x="270" y="2086" fill="#666" font-size="12">个人收藏</text><text x="301" y="2108">最近使用</text><text x="301" y="2132">文稿</text><text x="301" y="2157">应用程序</text><text x="301" y="2181" textLength="64">iCloud 云盘</text><text x="301" y="2205">下载</text></g>
<rect x="280" y="2100" width="12" height="15" rx="1" fill="#888"/><path d="M283 2104h6M283 2107h6M283 2110h6" stroke="#ddd"/>
<rect x="280" y="2125" width="14" height="15" fill="none" stroke="#888"/><path d="M279 2165l7-16 7 16M283 2160h8" stroke="#888" fill="none"/>
<path d="M282 2187q-3-7 3-8 2-5 6-2 5 0 4 8z" fill="none" stroke="#888" transform="translate(-1,0)"/><circle cx="286" cy="2205" r="8" fill="#777"/><path d="M286 2200v8M283 2205l3 3 3-3" stroke="#fff" fill="none" stroke-width="1.500"/>
<rect x="262" y="2217" width="676" height="205" fill="#c9c9c9"/><path d="M262 2217H938" stroke="#b5b5b5"/>
<g font-size="13.500" fill="#222" text-anchor="end"><text x="496" y="2244">启用:</text><text x="496" y="2270">格式:</text><text x="496" y="2298">导入为:</text></g>
<rect x="504" y="2234" width="220" height="19" rx="3" fill="#fff"/><rect x="709" y="2234" width="15" height="19" rx="3" fill="#2a85f5"/>
<rect x="504" y="2289" width="220" height="18" rx="3" fill="#fff"/><rect x="709" y="2289" width="15" height="18" rx="3" fill="#2a85f5"/>
<path d="M714 2241l2.500-3 2.500 3M714 2246l2.500 3 2.500-3M714 2296l2.500-3 2.500 3M714 2300l2.500 3 2.500-3" stroke="#fff" fill="none"/>
<g font-size="13" fill="#333"><text x="513" y="2244">所有可接受的文件</text><text x="505" y="2270" textLength="107">Illustrator/PDF/EPS</text><text x="513" y="2298">合成</text><text x="521" y="2334">创建合成</text><text x="523" y="2355" textLength="144">“Illustrator/PDF/EPS”序列</text><text x="536" y="2376" fill="#888" textLength="112">强制按字母顺序排列</text></g>
<path d="M504 2319H724" stroke="#b5b5b5"/>
<rect x="504" y="2327" width="13" height="13" rx="2" fill="#2a85f5"/><path d="M507 2333l3 4 5-7" stroke="#fff" fill="none" stroke-width="1.500"/>
<rect x="505" y="2349" width="12" height="12" rx="2" fill="#fff"/><rect x="519" y="2370" width="11" height="11" rx="2" fill="#dcdcdc"/>
<path d="M262 2422V2453Q262 2457 266 2457H934Q938 2457 938 2453V2422Z" fill="#e2e2e2"/><path d="M262 2422H938" stroke="#bbb"/>
<rect x="270" y="2431" width="57" height="18" rx="3" fill="#fff"/><rect x="789" y="2431" width="66" height="18" rx="3" fill="#fff"/><rect x="863" y="2431" width="68" height="18" rx="3" fill="#2a85f5"/>
<g font-size="13" text-anchor="middle" fill="#222"><text x="298" y="2440">选项</text><text x="822" y="2440">取消</text><text x="897" y="2440" fill="#dfeeff">打开</text></g>
<path d="M359 2730L372 2752H346Z" fill="#9b2fe0"/>
<text class="cap" x="380" y="2741" textLength="497">在文件选项中导入素材文件,注意导入为合成。</text>

<!-- ===== SECTION 4 : AE timeline ===== -->
<use href="#aeframe"/>
<use href="#aetools" transform="translate(0,2843)"/>
<text x="491" y="2825" font-size="11" fill="#adadad" textLength="212">Adobe After Effects CC 2018 - 无标题项目 *</text>
<g font-size="12" fill="#b0b0b0">
<text x="506" y="2843" fill="#ccc" textLength="22">对齐</text>
<text x="708" y="2843" fill="#2f8fe8" font-weight="700">默认</text><path d="M744 2838h10M744 2842h10M744 2846h10" stroke="#2f8fe8" stroke-width="1.300"/>
<text x="772" y="2843">标准</text><text x="835" y="2843">小屏幕</text><text x="910" y="2843">库</text><text x="958" y="2841" fill="#ccc" font-size="14">»</text><text x="1040" y="2843" fill="#ccc">搜索帮助</text>
</g>
<rect x="897" y="2858" width="3" height="367" fill="#0e0e0e"/><rect x="900" y="2858" width="300" height="367" fill="#232323"/>
<!-- project -->
<g font-size="13" fill="#a8a8a8">
<text x="9" y="2871" fill="#ddd" textLength="21">项目</text><path d="M40 2866h8M40 2870h8M40 2874h8" stroke="#999"/><rect x="8" y="2880" width="40" height="2" fill="#ccc"/>
<rect x="81" y="2865" width="10" height="10" fill="#b6b6dd"/><text x="100" y="2871" textLength="128">效果控件 笔右/未标题-1.ai</text><text x="284" y="2869" fill="#ccc" font-size="14">»</text>
<text x="312" y="2871" font-size="10" fill="#777">×</text><rect x="326" y="2865" width="10" height="11" fill="#b5a279"/><rect x="345" y="2869" width="8" height="7" fill="#bbb"/><path d="M347 2869v-2a2 2 0 0 1 4 0" stroke="#bbb" fill="none"/>
<text x="362" y="2871" fill="#bbb">合成</text><text x="387" y="2871" fill="#2f8fe8" font-weight="700" textLength="31">合成 1</text><path d="M425 2866h8M425 2870h8M425 2874h8" stroke="#999"/><rect x="312" y="2880" width="122" height="2" fill="#ccc"/>
<text x="467" y="2871" textLength="53">素材 (无)</text><text x="593" y="2871" textLength="52">图层 (无)</text>
</g>
<path d="M16 2904L19 2898H36L39 2904Z" fill="#a9a9a9"/><rect x="16" y="2908" width="54" height="29" fill="#a9a9a9" stroke="#bbb" stroke-width=".5"/>
<g font-size="11" fill="#8a8a8a"><text x="88" y="2895">未标题-1 个图层</text><path d="M162 2893h6l-3 4z" fill="#ddd"/><text x="88" y="2907" fill="#999">9 个项目</text></g>
<rect x="5" y="2990" width="285" height="16" fill="#141414"/><circle cx="15" cy="2996" r="3.500" fill="none" stroke="#bbb"/><path d="M13 3000l-3 4" stroke="#bbb"/><path d="M19 2999h4l-2 2z" fill="#bbb"/>
<rect y="3014" width="297" height="17" fill="#2a2a2a"/><path d="M0 3013H297M0 3031.500H297" stroke="#111"/>
<g font-size="12" fill="#8f8f8f"><text x="18" y="3023">名称</text><path d="M93 3025l6-5 6 5z" fill="#2f8fe8"/><text x="134" y="3023">类型</text><text x="205" y="3023">大小</text><text x="252" y="3023">帧速率</text></g>
<path d="M114 3017h5l6 7-4 4-7-7z" fill="#bbb"/><path d="M127 3016v14M200 3016v14M244 3016v14M291 3016v14" stroke="#1c1c1c"/>
<rect y="3068" width="282" height="16" fill="#303030"/><rect x="29" y="3068" width="78" height="16" fill="#a8a8a8"/>
<path d="M2 3073l7 3-7 3z" fill="#ccc"/><path d="M14 3071h6l2 2h6v9H14z" fill="#aaa"/>
<g fill="#aaa"><rect x="13" y="3034" width="15" height="15"/><rect x="13" y="3052" width="15" height="15"/></g><rect x="16" y="3037" width="9" height="9" fill="#3a5a3a"/><circle cx="21" cy="3042" r="2.500" fill="#b8382a"/><rect x="16" y="3055" width="9" height="9" fill="#3a5a3a"/><circle cx="21" cy="3060" r="2.500" fill="#b8382a"/>
<rect x="113" y="3036" width="9" height="9" fill="#b5a279"/><rect x="113" y="3054" width="9" height="9" fill="#b5a279"/><rect x="113" y="3072" width="9" height="9" fill="#e6d53f"/>
<g font-size="11.500" fill="#9a9a9a"><text x="32" y="3041">合成 1</text><text x="31" y="3059">未标题-1</text><text x="31" y="3077" fill="#3c3c3c">未标题-1 个图层</text><text x="134" y="3041">合成</text><text x="134" y="3059">合成</text><text x="134" y="3077">文件夹</text><text x="252" y="3040" font-size="10">35</text><text x="252" y="3058" font-size="10">35</text></g>
<path d="M286 3036h5v4h-5zM284 3043h4v3h-4zM291 3043h4v3h-4z" fill="#bbb"/>
<!-- project bottom -->
<rect x="70" y="3208" width="36" height="17" fill="#232323"/><text x="77" y="3218" font-size="11" fill="#a0a0a0">8 bpc</text><rect x="135" y="3209" width="45" height="15" rx="7" fill="#2b2b2b"/>
<rect x="2" y="3213" width="14" height="11" fill="#999"/><rect x="26" y="3212" width="13" height="11" fill="#999"/><rect x="48" y="3212" width="16" height="13" fill="#aaa"/><rect x="51" y="3215" width="10" height="7" fill="#5a4a4a"/><rect x="116" y="3214" width="9" height="10" fill="#999"/>
<!-- viewer -->
<rect x="320" y="2887" width="59" height="14" fill="#181818"/><text x="329" y="2894" font-size="11.500" fill="#2f8fe8" font-weight="700" textLength="30">合成 1</text>
<rect x="303" y="2906" width="594" height="2" fill="#0e0e0e"/>
<rect x="339" y="2907" width="1.500" height="296" fill="#666"/>
<rect x="410" y="2914" width="377" height="282" fill="#fec6c8"/>
<path d="M311 3063v16l3.500-3 2.500 5 2-1-2.500-5 4.500 0z" fill="#fff" stroke="#222" stroke-width=".8"/>
<g transform="translate(413.400,2899.500) scale(.356)"><use href="#art"/></g>
<!-- viewer bottom -->
<rect x="303" y="3205" width="594" height="20" fill="#1d1d1d"/>
<g class="ic"><rect x="309" y="3208" width="8" height="9"/><path d="M309 3221h14v-6"/><rect x="328" y="3208" width="12" height="9"/><path d="M331 3219h6"/><rect x="415" y="3208" width="12" height="9"/><path d="M438 3210v11h12v-14z" stroke="#2f8fe8"/><rect x="666" y="3207" width="13" height="13"/><rect x="687" y="3207" width="14" height="13"/></g>
<rect x="670" y="3211" width="5" height="5" fill="#ccc"/><path d="M524 3212h3l1-2h5l1 2h3v8h-13z" fill="#ccc"/><circle cx="565" cy="3210" r="3" fill="#e03a3a"/><circle cx="562" cy="3215" r="3" fill="#38b84a"/><circle cx="568" cy="3215" r="3" fill="#3a60e0"/>
<path d="M880 3208h12M886 3208v3M881 3212h10v8h-10z" stroke="#ccc" fill="none"/>
<use href="#chev" x="401" y="3215"/><use href="#chev" x="654" y="3215"/><use href="#chev" x="797" y="3215"/><use href="#chev" x="866" y="3215"/>
<g font-size="12" fill="#c6c6c6"><text x="350" y="3215" textLength="28">100%</text><text x="460" y="3216" textLength="48" fill="#a8a8a8">0:00:00:00</text><text x="585" y="3215">完整</text><text x="711" y="3215" textLength="57">活动摄像机</text><text x="814" y="3215" textLength="41">1 个视图</text></g>
<!-- right panels -->
<g font-size="12" fill="#9c9c9c"><text x="912" y="2871">信息</text><text x="912" y="2899">音频</text><text x="912" y="2927">预览</text><text x="912" y="2955">效果和预设</text><text x="912" y="2983">对齐</text><text x="912" y="3011">库</text><text x="912" y="3040" fill="#bbb" font-weight="700">段落</text><text x="912" y="3165">跟踪器</text></g>
<path d="M902 2883.500H1186M902 2912H1186M902 2940H1186M902 2968.500H1186M902 2997H1186M902 3025H1186M902 3150H1186M902 3178H1186" stroke="#0e0e0e" stroke-width="2"/>
<path d="M1169 3036h9M1169 3040h9M1169 3044h9" stroke="#999"/>
<rect x="907" y="3058" width="17" height="19" fill="#141414"/>
<g stroke="#999" stroke-width="1.300" fill="none">
<path d="M910 3061h12M910 3064h8M910 3067h12M910 3070h8M910 3073h12" stroke="#2f8fe8"/>
<path d="M933 3061h13M935 3064h9M933 3067h13M935 3070h9M933 3073h13"/>
<path d="M956 3061h14M960 3064h10M956 3067h14M960 3070h10M956 3073h14"/>
<path d="M985 3061h14M985 3064h14M985 3067h14M985 3070h14M985 3073h14"/>
<path d="M1008 3061h14M1008 3064h14M1008 3067h14M1008 3070h14M1008 3073h14"/>
<path d="M1032 3061h14M1032 3064h14M1032 3067h14M1032 3070h14M1032 3073h14"/>
<path d="M1059 3061h14M1059 3064h14M1059 3067h14M1059 3070h14M1059 3073h14"/>
<path d="M907 3085v18M909 3086h6M909 3090h6M909 3094h6M909 3098h6M905 3094h-3"/>
<path d="M975 3086h3M980 3086h9M980 3090h6v5h-6zM980 3098h9"/>
<path d="M1040 3086h3M1045 3086h9M1045 3090h9M1045 3094h9M1045 3098h9"/>
<path d="M908 3102h6M908 3106h6M908 3110h6M908 3114h6M915 3104v12"/>
<path d="M977 3116h3M982 3104h9M982 3108h9v5h-9zM982 3116h9"/>
</g>
<rect x="1036" y="3105" width="18" height="18" fill="#141414"/><path d="M1038 3109l5 4-5 4z" fill="#2f8fe8"/><path d="M1047 3108h5v13h-2v-7q-4 0-4-3t1-3z" fill="#2f8fe8"/><path d="M1060 3108h5v13h-2v-7q-4 0-4-3t1-3zM1073 3110l-5 4 5 4z" fill="#aaa" transform="translate(0,-1)"/>
<g font-size="12"><g fill="#2f8fe8" font-weight="700"><text x="926" y="3093">0</text><text x="996" y="3093">0</text><text x="1056" y="3093">0</text><text x="926" y="3108">0</text><text x="996" y="3110">0</text></g><g fill="#9c9c9c"><text x="935" y="3093">像素</text><text x="1005" y="3093">像素</text><text x="1066" y="3093">像素</text><text x="935" y="3108">像素</text><text x="1005" y="3110">像素</text></g></g>
<!-- timeline -->
<use href="#hdr"/>
<rect x="506" y="3304" width="670" height="2" fill="#22b52a"/>
<rect x="506" y="3308" width="670" height="219" fill="#333"/>
<g fill="#6e6e80"><rect x="506" y="3309" width="670" height="14"/><rect x="506" y="3328" width="670" height="15"/><rect x="506" y="3346" width="670" height="15"/><rect x="506" y="3365" width="670" height="15"/><rect x="506" y="3384" width="670" height="15"/><rect x="506" y="3403" width="670" height="15"/><rect x="506" y="3422" width="670" height="15"/><rect x="506" y="3441" width="670" height="15"/></g>
<use href="#ltr" y="3317"/><use href="#ltr" y="3336"/><use href="#ltr" y="3354"/><use href="#ltr" y="3373"/><use href="#ltr" y="3392"/><use href="#ltr" y="3411"/><use href="#ltr" y="3429"/><use href="#ltr" y="3448"/>
<use href="#hastl"/>
<g font-size="12" fill="#9a9a9a">
<text x="22" y="3242" textLength="46">渲染队列</text><text x="105" y="3243" font-size="10">×</text><rect x="118" y="3237" width="10" height="9" fill="#b5a279"/><text x="138" y="3242" font-size="13" fill="#ddd" textLength="30">合成 1</text><path d="M178 3239h7M178 3243h7M178 3247h7" stroke="#999"/><rect x="105" y="3252" width="82" height="2" fill="#ccc"/>
</g>
<text x="8" y="3266" font-size="16.500" font-weight="700" fill="#2d8ceb" textLength="74">0:00:00:00</text><text x="8" y="3280" font-size="9.500" fill="#1f5f9f" textLength="72">00000 (35.00 fps)</text>
<g font-size="12" fill="#999"><text x="100" y="3298" font-size="11">#</text><text x="128" y="3298" textLength="34">源名称</text><text x="378" y="3298">父级</text><text x="290" y="3298" font-size="12" font-style="italic">fx</text></g>
<g font-size="9" fill="#8a8a8a" text-anchor="middle" style="font-family:'Liberation Serif'">
<text x="520" y="3277">0f</text><text x="563" y="3277">15f</text><text x="621" y="3277">30f</text><text x="678" y="3277">10f</text><text x="735" y="3277">25f</text><text x="792" y="3277">05f</text><text x="850" y="3277">20f</text><text x="907" y="3277">03:00f</text><text x="965" y="3277">15f</text><text x="1022" y="3277">30f</text><text x="1080" y="3277">10f</text><text x="1136" y="3277">25f</text>
</g>
<g font-size="11.500" fill="#8a8a8a">
<text x="100" y="3317">1</text><text x="145" y="3317" textLength="77">笔右/未标题-1.ai</text>
<text x="100" y="3336">2</text><text x="145" y="3336" textLength="77">笔左/未标题-1.ai</text>
<text x="100" y="3355">3</text><text x="145" y="3355" textLength="77">划痕/未标题-1.ai</text>
<text x="100" y="3373">4</text><text x="145" y="3373" textLength="77">右眼/未标题-1.ai</text>
<text x="100" y="3392">5</text><text x="145" y="3392" textLength="77">右嘴/未标题-1.ai</text>
<text x="100" y="3411">6</text><text x="145" y="3411" textLength="77">左眼/未标题-1.ai</text>
<text x="100" y="3430">7</text><text x="145" y="3430" textLength="77">左嘴/未标题-1.ai</text>
<text x="100" y="3449">8</text><text x="145" y="3449" textLength="83">beijing/未标题-1.ai</text>
</g>
<g font-size="12" fill="#d4d4d4"><text x="401" y="3317">无</text><text x="401" y="3335">无</text><text x="401" y="3354">无</text><text x="401" y="3373">无</text><text x="401" y="3392">无</text><text x="401" y="3410">无</text><text x="401" y="3429">无</text><text x="401" y="3448">无</text></g>
<text x="310" y="3537" font-size="11" fill="#999" text-anchor="middle">切换开关/模式</text>
<path d="M446 3590L459 3612H433Z" fill="#9b2fe0"/>
<text class="cap" x="474" y="3602" textLength="331">将“未标题-1个文件”拖入下方。</text>
</svg>
</body></html>
